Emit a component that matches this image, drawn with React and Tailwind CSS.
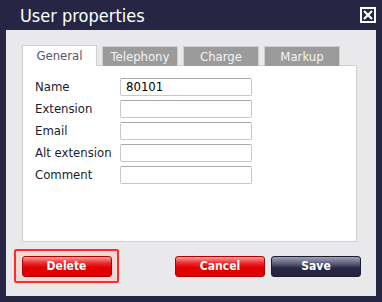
export default function App() {
  const font = { fontFamily: '"DejaVu Sans Condensed", "DejaVu Sans", sans-serif' };
  const rows = [
    ["Name", "80101"],
    ["Extension", ""],
    ["Email", ""],
    ["Alt extension", ""],
    ["Comment", ""],
  ];
  const tabs = ["General", "Telephony", "Charge", "Markup"];
  return (
    <div className="w-[382px] h-[302px] bg-[#262644] flex flex-col px-[6px] pb-[6px]" style={font}>
      <div className="h-[30px] flex items-start justify-between">
        <div className="text-[18px] leading-none text-white pl-[14px] pt-[7px]">User properties</div>
        <div className="mt-[7px] w-[16px] h-[16px] border-2 border-white flex items-center justify-center">
          <svg width="10" height="10" viewBox="0 0 10 10">
            <path d="M1 1L9 9M9 1L1 9" stroke="white" strokeWidth="2.2" />
          </svg>
        </div>
      </div>
      <div className="flex-1 bg-[#e9e9eb] flex flex-col pl-[16px] pt-[15px]">
        <div className="flex gap-[5px] h-[20px] relative z-10">
          {tabs.map((t, i) =>
            i === 0 ? (
              <div key={t} className="w-[75px] h-[21px] bg-white border border-[#d0d0d0] border-b-0 flex items-center justify-center text-[13px] text-[#55556a]">
                {t}
              </div>
            ) : (
              <div key={t} className="w-[76px] h-[20px] mt-[1px] bg-[#9b9b9b] border border-[#cfcfcf] border-b-0 flex items-center justify-center text-[13px] text-[#f4f4f4]">
                {t}
              </div>
            )
          )}
        </div>
        <div className="w-[335px] h-[177px] bg-white border border-[#d0d0d0] pt-[12px] pl-[12px] flex flex-col gap-[4px]">
          {rows.map(([l, v]) => (
            <div key={l} className="flex items-center h-[18px]">
              <div className="w-[85px] text-[13px] text-[#1c1c30]">{l}</div>
              <div className="w-[132px] h-[18px] border border-[#c8c8c8] border-t-[#a8a8a8] rounded-[2px] text-[13px] text-black pl-[5px] leading-[16px]">
                {v}
              </div>
            </div>
          ))}
        </div>
        <div className="flex items-center mt-[7px] -ml-[8px]">
          <div className="w-[105px] h-[34px] border-2 border-[#ff2a2a] rounded-[2px] flex items-center justify-center bg-[#f3d8d8]">
            <div className="w-[91px] h-[21px] bg-[#e9e9eb] flex items-center justify-center">
              <RedBtn label="Delete" />
            </div>
          </div>
          <div className="ml-[56px]">
            <RedBtn label="Cancel" />
          </div>
          <div className="ml-[6px]">
            <div className="w-[90px] h-[21px] rounded-[3px] border border-[#1c1c30] flex items-center justify-center text-white font-bold text-[12px] bg-[linear-gradient(to_bottom,#a0a0b8_0%,#5c5c78_35%,#262644_60%,#262644_100%)]">
              Save
            </div>
          </div>
        </div>
      </div>
    </div>
  );
}

function RedBtn({ label }) {
  return (
    <div className="w-[90px] h-[21px] rounded-[3px] border border-[#b00000] flex items-center justify-center text-white font-bold text-[12px] bg-[linear-gradient(to_bottom,#f8a0a0_0%,#ee3030_30%,#e00000_55%,#e00000_100%)]">
      {label}
    </div>
  );
}
